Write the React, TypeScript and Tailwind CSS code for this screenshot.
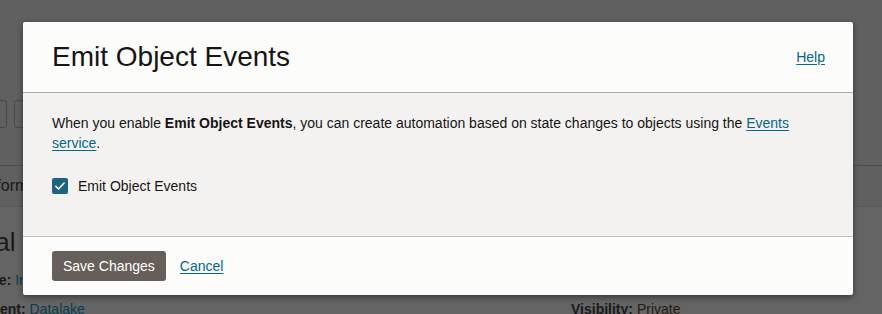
import { useState } from "react";

function CheckIcon() {
  return (
    <svg viewBox="0 0 16 16" className="h-[12px] w-[12px]" fill="none">
      <path d="M2.5 8.5 L6 12 L13.5 4" stroke="white" strokeWidth="2" strokeLinecap="round" strokeLinejoin="round" />
    </svg>
  );
}

export default function App() {
  const [checked, setChecked] = useState(true);

  return (
    <div
      className="relative h-[314px] w-[882px] overflow-hidden bg-[#606060] text-[14px] text-[#161513]"
      style={{ fontFamily: '"Liberation Sans", Arial, sans-serif' }}
    >
      {/* dimmed page behind the dialog */}
      <div className="flex h-full flex-col">
        <div className="h-[100px] shrink-0" />
        <div className="flex shrink-0 gap-[7px]">
          <div className="h-[28px] w-[7px] rounded-r-[3px] border border-l-0 border-[#4a4a4a]" />
          <div className="h-[28px] w-[12px] rounded-l-[3px] border border-r-0 border-[#4a4a4a]" />
        </div>
        <div className="mt-[37px] h-px w-full shrink-0 bg-[#4e4e4e]" />
        <div className="mt-[8px] flex shrink-0 items-center">
          <span className="-ml-[17px] whitespace-nowrap text-[16px] leading-[24px] text-[#1a1a1a]">Information</span>
        </div>
        <div className="mt-[8px] h-px w-full shrink-0 bg-[#585858]" />
        <div className="shrink-0 grow bg-[#646464]">
          <div className="-ml-[77px] mt-[20px] whitespace-nowrap text-[26px] leading-[30px] text-[#1a1a1a]">General</div>
          <div className="-ml-[25px] mt-[13px] whitespace-nowrap leading-[20px]">
            <span className="font-bold text-[#1a1a1a]">Type: </span>
            <span className="text-[#0b3c50]">Internal</span>
          </div>
          <div className="mt-[9px] flex whitespace-nowrap leading-[20px]">
            <div className="-ml-[70px] w-[641px] shrink-0">
              <span className="font-bold text-[#1a1a1a]">Compartment: </span>
              <span className="text-[#0b3c50]">Datalake</span>
            </div>
            <div>
              <span className="font-bold text-[#1a1a1a]">Visibility: </span>
              <span className="text-[#2a1a10]">Private</span>
            </div>
          </div>
        </div>
      </div>

      {/* dialog */}
      <div className="absolute left-[23px] top-[22px] w-[830px] rounded-[2px] bg-[#fcfcfb] shadow-[0_2px_6px_rgba(0,0,0,0.45)]">
        <div className="flex h-[71px] items-center justify-between border-b border-[#b0aeab] pl-[29px] pr-[28px]">
          <h1 className="text-[28px] font-normal leading-[32px] text-[#161513]">Emit Object Events</h1>
          <a href="#" className="text-[14px] text-[#04678e] underline underline-offset-2">
            Help
          </a>
        </div>

        <div className="h-[143px] bg-[#f3f2f1] px-[29px] pt-[20px]">
          <p className="leading-[20px]">
            When you enable <b>Emit Object Events</b>, you can create automation based on state changes to objects using the{" "}
            <a href="#" className="text-[#04678e] underline underline-offset-2">
              Events service
            </a>
            .
          </p>
          <label className="mt-[23px] flex cursor-pointer items-center gap-[10px] leading-[20px]">
            <span
              onClick={() => setChecked(!checked)}
              className={`flex h-[16px] w-[16px] items-center justify-center rounded-[2px] ${
                checked ? "bg-[#1d6384]" : "border border-[#8b8580] bg-white"
              }`}
            >
              {checked ? <CheckIcon /> : null}
            </span>
            <span>Emit Object Events</span>
          </label>
        </div>

        <div className="flex h-[59px] items-center gap-[14px] border-t border-[#c4c1bd] px-[29px]">
          <button
            type="button"
            className="h-[30px] rounded-[3px] bg-[#675f5a] px-[11px] text-[14px] text-white"
          >
            Save Changes
          </button>
          <a href="#" className="text-[#04678e] underline underline-offset-2">
            Cancel
          </a>
        </div>
      </div>
    </div>
  );
}
